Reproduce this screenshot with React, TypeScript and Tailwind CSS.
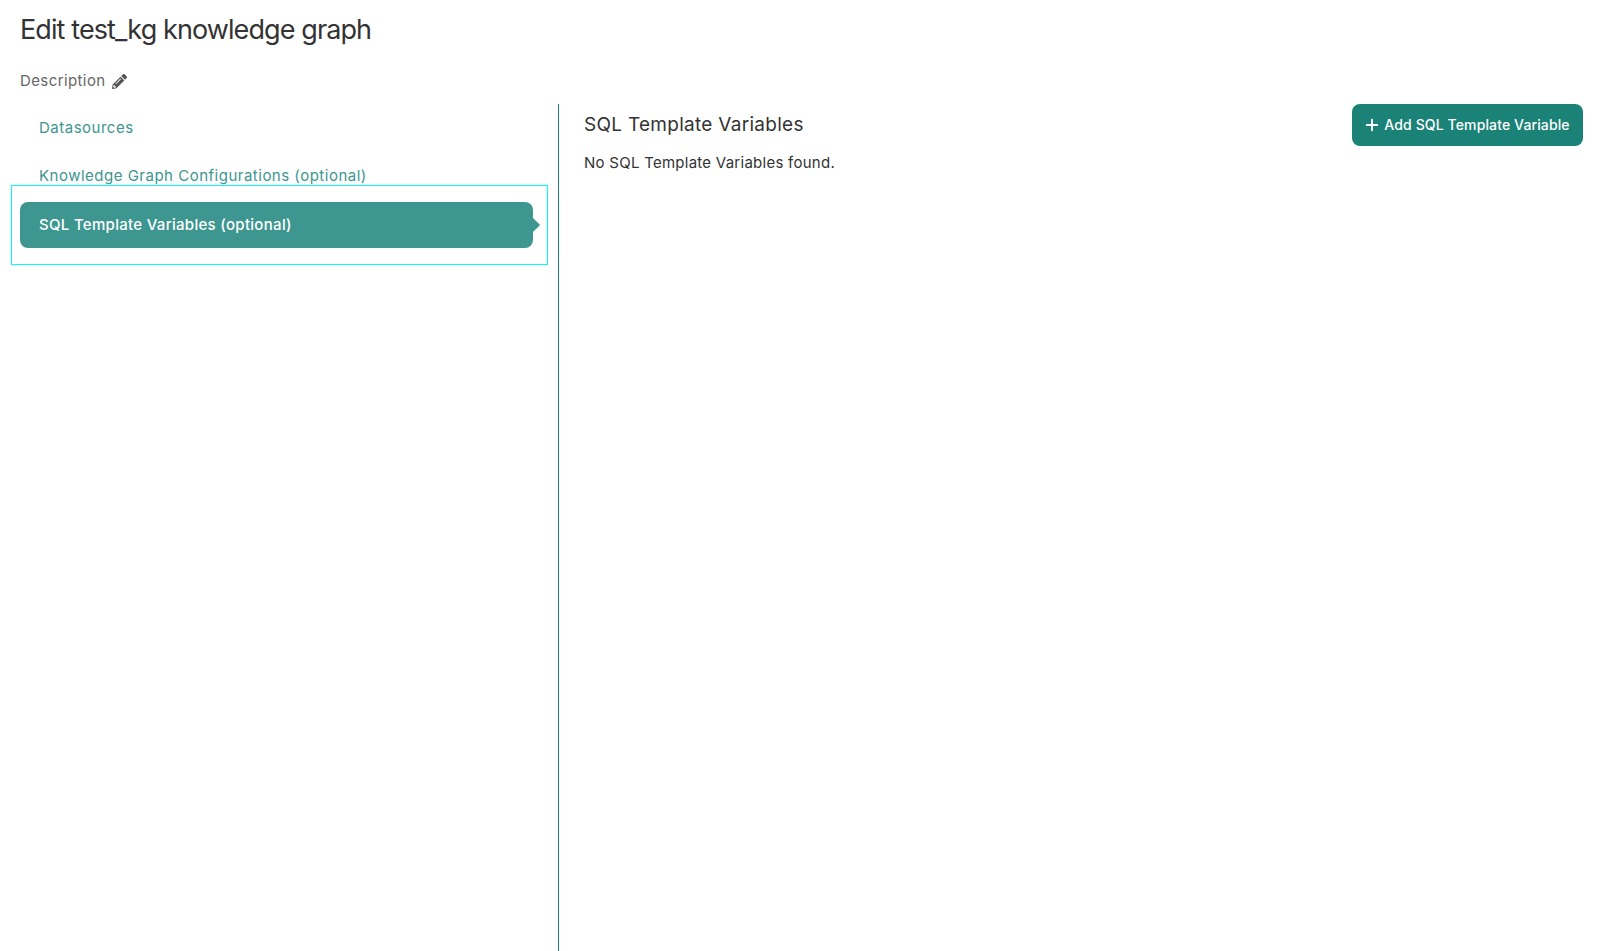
import { Plus } from "lucide-react";
import { FaPencilAlt } from "react-icons/fa";

function NavLink({ label }: { label: string }) {
  return (
    <div className="flex h-[48px] items-center pl-[39px] text-[15px] tracking-[0.5px] text-[#3d9690]">
      {label}
    </div>
  );
}

export default function App() {
  return (
    <div className="flex h-[951px] flex-col overflow-hidden bg-white font-['Inter',sans-serif] text-[#333333]">
      <header className="h-[104px] pl-[20px]">
        <h1 className="pt-[11px] text-[27px] leading-[38px] tracking-[-0.9px] text-[#333333]">
          Edit test_kg knowledge graph
        </h1>
        <div className="mt-[21px] flex items-center gap-[6px] text-[15px] leading-[22px] tracking-[0.4px] text-[#666666]">
          Description
          <FaPencilAlt className="h-[15px] w-[15px] text-[#555555]" />
        </div>
      </header>

      <div className="flex min-h-0 flex-1">
        <aside className="w-[559px] shrink-0 border-r border-[#1a8277]">
          <NavLink label="Datasources" />
          <NavLink label="Knowledge Graph Configurations (optional)" />
          <div className="pl-[20px] pr-[25px] pt-[2px]">
            <div className="relative flex h-[46px] items-center rounded-[8px] bg-[#3d9690] pl-[19px] text-[15px] font-medium tracking-[0.3px] text-white">
              SQL Template Variables (optional)
              <span className="absolute -right-[5px] top-[18px] h-[10px] w-[10px] rotate-45 bg-[#3d9690]" />
              <span className="absolute -bottom-[17px] -left-[9px] -right-[15px] -top-[17px] border border-[#00ffff]" />
            </div>
          </div>
        </aside>

        <main className="min-w-0 flex-1 pl-[25px] pr-[35px]">
          <div className="flex items-center justify-between">
            <h2 className="text-[19px] leading-[28px] tracking-[0.28px] text-[#333333]">SQL Template Variables</h2>
            <button className="flex h-[42px] w-[231px] items-center justify-center gap-[3px] rounded-[8px] bg-[#1a8277] pb-[1px] pr-[2px] text-[14px] font-medium tracking-[0.12px] text-white">
              <Plus className="h-[18px] w-[18px]" strokeWidth={2.5} />
              Add SQL Template Variable
            </button>
          </div>
          <p className="mt-[6px] text-[15px] leading-[22px] tracking-[0.26px] text-[#333333]">No SQL Template Variables found.</p>
        </main>
      </div>
    </div>
  );
}
